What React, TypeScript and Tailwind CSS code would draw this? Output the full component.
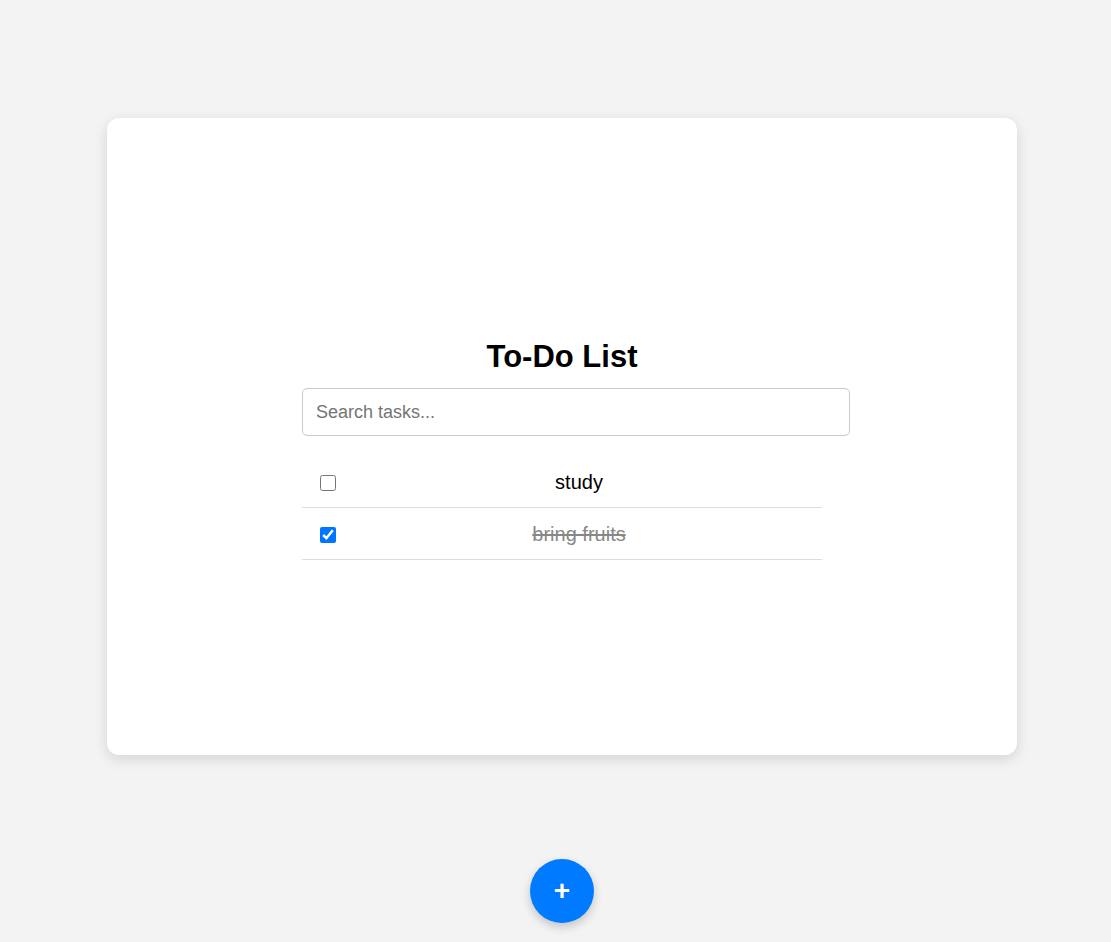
import { useState } from "react";

type Task = { id: number; text: string; done: boolean };

const initialTasks: Task[] = [
  { id: 1, text: "study", done: false },
  { id: 2, text: "bring fruits", done: true },
];

export default function App() {
  const [tasks, setTasks] = useState<Task[]>(initialTasks);
  const [query, setQuery] = useState("");

  const visible = tasks.filter((t) => t.text.toLowerCase().includes(query.toLowerCase()));

  const toggle = (id: number) =>
    setTasks((prev) => prev.map((t) => (t.id === id ? { ...t, done: !t.done } : t)));

  return (
    <div className="flex min-h-[942px] flex-col items-center bg-[#f3f3f3] pt-[118px] pl-[13px] font-['Liberation_Sans',Arial,sans-serif]">
      <div className="flex h-[637px] w-[910px] flex-col items-center rounded-xl bg-white pt-[220px] shadow-[0_4px_14px_rgba(0,0,0,0.13)]">
        <div className="w-[520px]">
          <h1 className="mb-[13px] text-center text-[31px] leading-[37px] font-bold text-black">To-Do List</h1>
          <input
            type="text"
            value={query}
            onChange={(e) => setQuery(e.target.value)}
            placeholder="Search tasks..."
            className="h-[48px] w-[548px] rounded-[5px] border border-[#cccccc] px-[13px] text-[18px] text-black outline-none placeholder:text-[#757575]"
          />
          <ul className="mt-[20px]">
            {visible.map((task) => (
              <li key={task.id} className="flex items-center border-b border-[#dddddd] pt-[15px] pb-[13px] pl-[18px]">
                <input
                  type="checkbox"
                  checked={task.done}
                  onChange={() => toggle(task.id)}
                  className="m-0 h-4 w-4 accent-[#0075ff]"
                />
                <span
                  className={`flex-1 text-center text-[20px] leading-[23px] ${
                    task.done ? "text-[#888888] line-through" : "text-black"
                  }`}
                >
                  {task.text}
                </span>
              </li>
            ))}
          </ul>
        </div>
      </div>
      <button className="mt-[104px] flex h-16 w-16 items-center justify-center rounded-full bg-[#007bff] text-[28px] leading-none font-bold text-white shadow-[0_4px_10px_rgba(0,0,0,0.2)]">
        +
      </button>
    </div>
  );
}
